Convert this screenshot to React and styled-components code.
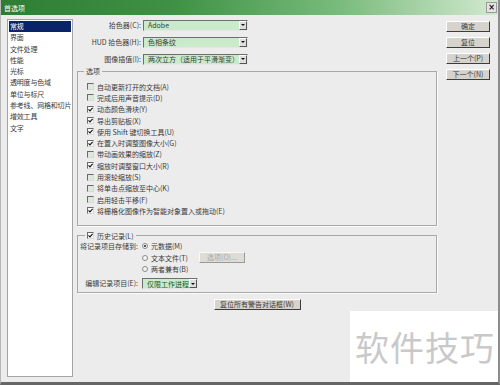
import React from 'react';
import styled, { createGlobalStyle } from 'styled-components';

const GlobalStyle = createGlobalStyle`
  html, body {
    margin: 0;
    padding: 0;
    background: #fff;
  }
  body {
    font-family: "Noto Sans CJK SC", "Liberation Sans", sans-serif;
    font-size: 7px;
    color: #3a3a3a;
  }
`;

const Window = styled.div`
  position: relative;
  width: 500px;
  height: 385px;
  box-sizing: border-box;
  background: #ececec;
  border-left: 1px solid #b8b8b8;
  border-right: 2px solid #8c8c8c;
  border-bottom: 3px solid #666;
  display: flex;
  flex-direction: column;
  overflow: hidden;
`;

const TitleBar = styled.div`
  flex: none;
  height: 15px;
  display: flex;
  align-items: center;
  justify-content: space-between;
  padding: 0 1px 0 3px;
  background: linear-gradient(to right, #2e7d33 0%, #3f9245 35%, #79bb7b 68%, #d3e9d0 100%);
  color: #fff;
`;

const CloseButton = styled.span`
  width: 9px;
  height: 9px;
  display: flex;
  align-items: center;
  justify-content: center;
  background: #e4e4e4;
  border: 1px solid #9a9a9a;
  color: #111;
  font-family: "DejaVu Sans", sans-serif;
  font-weight: bold;
  font-size: 8px;
  line-height: 1;
`;

const Body = styled.div`
  flex: 1;
  display: flex;
  padding: 4px 0 0 6px;
`;

const CategoryList = styled.ul`
  list-style: none;
  margin: 0 4px 0 0;
  padding: 1px;
  width: 66px;
  height: 358px;
  box-sizing: border-box;
  background: #fff;
  border: 1px solid #a4a4a4;
`;

const Category = styled.li`
  height: 11.3px;
  line-height: 11.3px;
  padding-left: 1px;
  white-space: nowrap;
  letter-spacing: -0.2px;
  background: ${(p) => (p.$active ? '#0a246a' : 'transparent')};
  color: ${(p) => (p.$active ? '#fff' : '#3a3a3a')};
`;

const Main = styled.div`
  width: 360px;
  display: flex;
  flex-direction: column;
`;

const FormRow = styled.div`
  display: flex;
  align-items: center;
  height: 12px;
  margin-bottom: 5px;
`;

const FieldLabel = styled.label`
  width: ${(p) => p.$width || 66}px;
  padding-right: 2px;
  box-sizing: border-box;
  text-align: right;
  white-space: nowrap;
`;

const Select = styled.div`
  width: ${(p) => p.$width}px;
  height: ${(p) => p.$height || 11}px;
  box-sizing: border-box;
  display: flex;
  align-items: center;
  justify-content: space-between;
  background: #c9ebcb;
  border: 1px solid;
  border-color: #6e6e6e #e6e6e6 #e6e6e6 #6e6e6e;
  padding-left: 4px;
  color: ${(p) => p.$color || '#3a3a3a'};
  white-space: nowrap;
`;

const Arrow = styled.span`
  width: 8px;
  height: 100%;
  box-sizing: border-box;
  display: flex;
  align-items: center;
  justify-content: center;
  background: #dedede;
  border: 1px solid;
  border-color: #fff #555 #555 #fff;

  &::after {
    content: '';
    border-left: 2px solid transparent;
    border-right: 2px solid transparent;
    border-top: 2px solid #111;
  }
`;

const Group = styled.fieldset`
  margin: ${(p) => p.$top || 0}px 0 0;
  padding: ${(p) => p.$pad};
  width: 360px;
  box-sizing: border-box;
  border: 1px solid #a9a9a9;
  box-shadow: 1px 1px 0 #fbfbfb;
  min-width: 0;
`;

const Legend = styled.legend`
  margin-left: ${(p) => p.$shift || 0}px;
  padding: 0 2px;
  height: 10px;
  line-height: 10px;
  display: flex;
  align-items: center;
  gap: 3px;
`;

const CheckRow = styled.div`
  display: flex;
  align-items: center;
  gap: 3px;
  height: 11.3px;
  white-space: nowrap;
`;

const Box = styled.span`
  width: 7px;
  height: 7px;
  flex: none;
  box-sizing: border-box;
  display: flex;
  align-items: center;
  justify-content: center;
  background: ${(p) => (p.$checked ? '#fafafa' : '#dfe8dc')};
  border: 1px solid;
  border-color: #6a6a6a #d8d8d8 #d8d8d8 #6a6a6a;
`;

const Radio = styled.span`
  width: 6px;
  height: 6px;
  flex: none;
  box-sizing: border-box;
  border-radius: 50%;
  border: 1px solid #8a8a8a;
  background: #f4f4f4;
  display: flex;
  align-items: center;
  justify-content: center;

  &::after {
    content: '';
    width: 2px;
    height: 2px;
    border-radius: 50%;
    background: ${(p) => (p.$checked ? '#222' : 'transparent')};
  }
`;

const HistoryGrid = styled.div`
  display: grid;
  grid-template-columns: 62px 1fr;
  align-items: start;
`;

const RadioColumn = styled.div`
  display: flex;
  flex-direction: column;
`;

const RadioRow = styled.div`
  display: flex;
  align-items: center;
  gap: 3px;
  height: 11.5px;
  white-space: nowrap;
`;

const GridLabel = styled.span`
  height: ${(p) => p.$h}px;
  line-height: ${(p) => p.$h}px;
  padding-right: 4px;
  text-align: right;
  white-space: nowrap;
  margin-top: ${(p) => p.$top || 0}px;
`;

const GridCell = styled.div`
  margin-top: ${(p) => p.$top || 0}px;
`;

const Button = styled.button`
  width: ${(p) => p.$width || 44}px;
  height: ${(p) => p.$height || 11}px;
  margin: 0;
  padding: 0;
  font: inherit;
  white-space: nowrap;
  background: ${(p) => (p.$disabled ? '#dedcd6' : '#d6d3cc')};
  color: ${(p) => (p.$disabled ? '#a8a8a8' : '#3a3a3a')};
  border: 1px solid;
  border-color: ${(p) => (p.$disabled ? '#f8f8f8 #9a9a9a #9a9a9a #f8f8f8' : '#fff #3c3c3c #3c3c3c #fff')};
  line-height: 1;
`;

const OptionButton = styled(Button)`
  margin-left: 8px;
`;

const ResetButton = styled(Button)`
  align-self: center;
  margin-top: 6px;
`;

const SideButtons = styled.div`
  display: flex;
  flex-direction: column;
  gap: 5px;
  margin: 2px 0 0 9px;
`;

const Watermark = styled.div`
  position: absolute;
  right: -2px;
  bottom: -3px;
  width: 150px;
  height: 74px;
  background: #fff;
  display: flex;
  align-items: center;
  justify-content: center;
  color: #c9c9c9;
  font-size: 34px;
  letter-spacing: 1px;
  padding-bottom: 4px;
  box-sizing: border-box;
`;

const Check = () => (
  <svg width="5" height="5" viewBox="0 0 5 5">
    <path d="M0.5 2.4 L2 3.9 L4.6 0.9" fill="none" stroke="#111" strokeWidth="1.1" />
  </svg>
);

const CheckBox = ({ checked }) => (
  <Box $checked={checked}>{checked ? <Check /> : null}</Box>
);

const categories = [
  '常规', '界面', '文件处理', '性能', '光标', '透明度与色域',
  '单位与标尺', '参考线、网格和切片', '增效工具', '文字',
];

const options = [
  ['自动更新打开的文档(A)', false],
  ['完成后用声音提示(D)', false],
  ['动态颜色滑块(Y)', true],
  ['导出剪贴板(X)', true],
  ['使用 Shift 键切换工具(U)', true],
  ['在置入时调整图像大小(G)', true],
  ['带动画效果的缩放(Z)', false],
  ['缩放时调整窗口大小(R)', true],
  ['用滚轮缩放(S)', false],
  ['将单击点缩放至中心(K)', false],
  ['启用轻击平移(F)', false],
  ['将栅格化图像作为智能对象置入或拖动(E)', true],
];

export default function App() {
  return (
    <>
      <GlobalStyle />
      <Window>
        <TitleBar>
          <span>首选项</span>
          <CloseButton>×</CloseButton>
        </TitleBar>
        <Body>
          <CategoryList>
            {categories.map((c, i) => (
              <Category key={c} $active={i === 0}>{c}</Category>
            ))}
          </CategoryList>

          <Main>
            <FormRow>
              <FieldLabel>拾色器(C):</FieldLabel>
              <Select $width={105}>Adobe<Arrow /></Select>
            </FormRow>
            <FormRow>
              <FieldLabel>HUD 拾色器(H):</FieldLabel>
              <Select $width={105}>色相条纹<Arrow /></Select>
            </FormRow>
            <FormRow>
              <FieldLabel>图像插值(I):</FieldLabel>
              <Select $width={105}>两次立方（适用于平滑渐变）<Arrow /></Select>
            </FormRow>

            <Group $top={-4} $pad="5px 0 8px 9px">
              <Legend $shift={-3}>选项</Legend>
              {options.map(([text, on]) => (
                <CheckRow key={text}>
                  <CheckBox checked={on} />
                  {text}
                </CheckRow>
              ))}
            </Group>

            <Group $top={5} $pad="0 2px 3px">
              <Legend $shift={5}>
                <CheckBox checked />
                历史记录(L)
              </Legend>
              <HistoryGrid>
                <GridLabel $h={11.5}>将记录项目存储到:</GridLabel>
                <RadioColumn>
                  <RadioRow><Radio $checked />元数据(M)</RadioRow>
                  <RadioRow>
                    <Radio />文本文件(T)
                    <OptionButton $width={46} $height={11} $disabled>选项(O)...</OptionButton>
                  </RadioRow>
                  <RadioRow><Radio />两者兼有(B)</RadioRow>
                </RadioColumn>
                <GridLabel $h={11} $top={3}>编辑记录项目(E):</GridLabel>
                <GridCell $top={3}>
                  <Select $width={56} $height={11} $color="#1f5a2a">仅限工作进程<Arrow /></Select>
                </GridCell>
              </HistoryGrid>
            </Group>

            <ResetButton $width={87}>复位所有警告对话框(W)</ResetButton>
          </Main>

          <SideButtons>
            <Button>确定</Button>
            <Button>复位</Button>
            <Button>上一个(P)</Button>
            <Button>下一个(N)</Button>
          </SideButtons>
        </Body>
        <Watermark>软件技巧</Watermark>
      </Window>
    </>
  );
}
